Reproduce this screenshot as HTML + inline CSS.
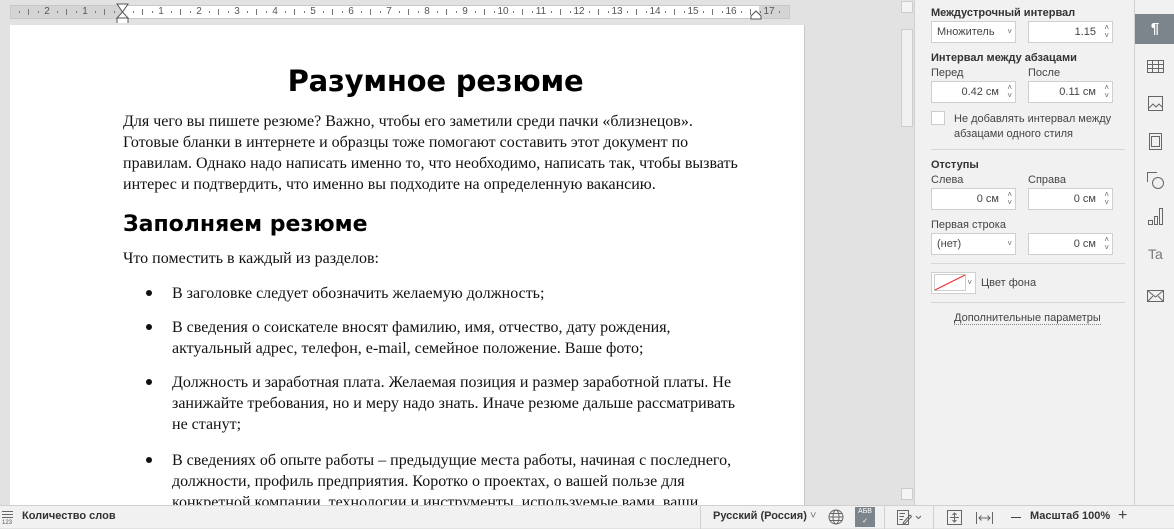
<!DOCTYPE html>
<html><head><meta charset="utf-8">
<style>
*{margin:0;padding:0;box-sizing:border-box}
body{width:1174px;height:528px;overflow:hidden;background:#e2e2e2;font-family:"Liberation Sans",sans-serif;position:relative}
.abs{position:absolute}
#ruler{left:10px;top:5px;width:780px;height:14px;background:#d4d4d4;border:1px solid #c8c8c8}
#rw{left:112px;top:0;width:636px;height:12px;background:#fff}
.tk{position:absolute;width:1px;background:#777;}
.num{position:absolute;font-size:10px;color:#555;top:0px;line-height:12px;transform:translateX(-50%)}
#page{left:10px;top:25px;width:795px;height:480px;background:#fff;border-right:1px solid #c8c8c8;overflow:hidden}
.serif{font-family:"Liberation Serif",serif;font-size:16px;line-height:21px;color:#111}
h1{position:absolute;left:28px;width:795px;top:39px;text-align:center;font-family:"DejaVu Sans",sans-serif;font-weight:bold;font-size:29px;color:#000;letter-spacing:-0.2px}
h2{position:absolute;left:113px;top:187px;font-family:"DejaVu Sans",sans-serif;font-weight:bold;font-size:22px;color:#000}
.p{position:absolute;left:113px;width:628px}
.li{position:absolute;left:162px;width:600px}
.dot{position:absolute;left:136px;width:6px;height:6px;border-radius:3px;background:#111}
#vs{left:900px;top:0;width:14px;height:505px;background:#e2e2e2}
#panel{left:914px;top:0;width:220px;height:505px;background:#f1f1f1;border-left:1px solid #d0d0d0;font-size:11px;color:#444}
#tabs{left:1134px;top:0;width:40px;height:505px;background:#f1f1f1;border-left:1px solid #d0d0d0}
.lb{position:absolute;font-size:11px;color:#444}
.b{font-weight:bold;color:#333}
.inp{position:absolute;height:22px;width:85px;background:#fff;border:1px solid #cfcfcf;font-size:11px;color:#444;line-height:20px;padding:0 16px 0 5px}
.inp.r{text-align:right}
.sp{position:absolute;right:3px;top:2px;font-size:8px;line-height:8px;color:#666}
.sep{position:absolute;left:16px;width:194px;height:1px;background:#d6d6d6}
#status{left:0;top:505px;width:1174px;height:23px;background:#f1f1f1;border-top:1px solid #d0d0d0;font-size:12px;color:#333}
.ic{position:absolute;stroke:#666;fill:none;stroke-width:1}
</style></head><body>
<div id="ruler" class="abs"><div id="rw" class="abs"></div><div id="rt"></div></div>
<svg class="abs" style="left:116px;top:3px" width="14" height="20"><path d="M1 1H12L6.5 9ZM6.5 9L1 15H12Z M1 15H12V21H1Z" stroke="#555" fill="#fff"/></svg>
<svg class="abs" style="left:750px;top:10px" width="12" height="10"><path d="M1 9H11V6L6 1L1 6Z" stroke="#555" fill="#fff"/></svg>
<div id="page" class="abs">
<h1>Разумное резюме</h1>
<div class="p serif" style="top:86px">Для чего вы пишете резюме? Важно, чтобы его заметили среди пачки «близнецов». Готовые бланки в интернете и образцы тоже помогают составить этот документ по правилам. Однако надо написать именно то, что необходимо, написать так, чтобы вызвать интерес и подтвердить, что именно вы подходите на определенную вакансию.</div>
<h2>Заполняем резюме</h2>
<div class="p serif" style="top:223px">Что поместить в каждый из разделов:</div>
<div class="dot" style="top:265px"></div><div class="li serif" style="top:258px">В заголовке следует обозначить желаемую должность;</div>
<div class="dot" style="top:299px"></div><div class="li serif" style="top:292px;width:520px">В сведения о соискателе вносят фамилию, имя, отчество, дату рождения, актуальный адрес, телефон, e-mail, семейное положение. Ваше фото;</div>
<div class="dot" style="top:354px"></div><div class="li serif" style="top:347px;width:580px">Должность и заработная плата. Желаемая позиция и размер заработной платы. Не занижайте требования, но и меру надо знать. Иначе резюме дальше рассматривать не станут;</div>
<div class="dot" style="top:432px"></div><div class="li serif" style="top:425px;width:580px">В сведениях об опыте работы – предыдущие места работы, начиная с последнего, должности, профиль предприятия. Коротко о проектах, о вашей пользе для конкретной компании, технологии и инструменты, используемые вами, ваши</div>
</div>
<div id="vs" class="abs">
<div class="abs" style="left:1px;top:1px;width:12px;height:12px;background:#f4f4f4;border:1px solid #ccc"></div>
<div class="abs" style="left:1px;top:29px;width:12px;height:98px;background:#f0f0f0;border:1px solid #ccc"></div>
<div class="abs" style="left:1px;top:488px;width:12px;height:12px;background:#f4f4f4;border:1px solid #ccc"></div>
</div>
<div id="panel" class="abs">
<div class="lb b" style="left:16px;top:7px">Междустрочный интервал</div>
<div class="inp" style="left:16px;top:21px">Множитель<span class="sp" style="top:6px">˅</span></div>
<div class="inp r" style="left:113px;top:21px">1.15<span class="sp">˄<br>˅</span></div>
<div class="lb b" style="left:16px;top:52px">Интервал между абзацами</div>
<div class="lb" style="left:16px;top:67px">Перед</div><div class="lb" style="left:113px;top:67px">После</div>
<div class="inp r" style="left:16px;top:81px">0.42 см<span class="sp">˄<br>˅</span></div>
<div class="inp r" style="left:113px;top:81px">0.11 см<span class="sp">˄<br>˅</span></div>
<div class="abs" style="left:16px;top:111px;width:14px;height:14px;background:#fff;border:1px solid #ccc"></div>
<div class="lb" style="left:39px;top:112px;line-height:15px">Не добавлять интервал между<br>абзацами одного стиля</div>
<div class="sep" style="top:149px"></div>
<div class="lb b" style="left:16px;top:159px">Отступы</div>
<div class="lb" style="left:16px;top:174px">Слева</div><div class="lb" style="left:113px;top:174px">Справа</div>
<div class="inp r" style="left:16px;top:188px">0 см<span class="sp">˄<br>˅</span></div>
<div class="inp r" style="left:113px;top:188px">0 см<span class="sp">˄<br>˅</span></div>
<div class="lb" style="left:16px;top:219px">Первая строка</div>
<div class="inp" style="left:16px;top:233px">(нет)<span class="sp" style="top:6px">˅</span></div>
<div class="inp r" style="left:113px;top:233px">0 см<span class="sp">˄<br>˅</span></div>
<div class="sep" style="top:263px"></div>
<div class="abs" style="left:16px;top:272px;width:45px;height:22px;background:#fff;border:1px solid #cfcfcf"><svg width="34" height="18" style="position:absolute;left:2px;top:1px"><rect x=".5" y=".5" width="31" height="16" fill="#fff" stroke="#ccc"/><path d="M1 16L31 1" stroke="#e33" stroke-width="1.2"/></svg><span class="sp" style="top:6px">˅</span></div>
<div class="lb" style="left:66px;top:277px">Цвет фона</div>
<div class="sep" style="top:302px"></div>
<div class="lb" style="left:39px;top:312px;border-bottom:1px dotted #888">Дополнительные параметры</div>
</div>
<div id="tabs" class="abs">
<div class="abs" style="left:0;top:14px;width:40px;height:30px;background:#7d858c;color:#fff;font-size:15px;text-align:center;line-height:30px;font-weight:bold">¶</div>
<svg class="ic" style="left:12px;top:60px" width="18" height="14"><path d="M.5 .5H16.5V12.5H.5ZM.5 4.5H16.5M.5 8.5H16.5M5.5 .5V12.5M11.5 .5V12.5"/></svg>
<svg class="ic" style="left:13px;top:96px" width="16" height="16"><path d="M.5 .5H14.5V14.5H.5ZM1 12L5 8L8 11L11 8L14 11"/></svg>
<svg class="ic" style="left:14px;top:133px" width="14" height="18"><path d="M.5 .5H12.5V16.5H.5ZM2.5 3.5H10.5V13.5H2.5Z"/></svg>
<svg class="ic" style="left:12px;top:172px" width="18" height="18"><path d="M.5 10V.5H10M.5 .5"/><circle cx="11" cy="11" r="5.5"/></svg>
<svg class="ic" style="left:13px;top:208px" width="16" height="18"><path d="M.5 12.5H4.5V16.5H.5ZM6.5 8.5H9.5V16.5H6.5ZM11.5 .5H14.5V16.5H11.5Z"/></svg>
<div class="abs" style="left:13px;top:246px;font-size:14px;color:#777">Ta</div>
<svg class="ic" style="left:12px;top:290px" width="18" height="12"><path d="M.5 .5H16.5V11.5H.5ZM.5 .5L8.5 7L16.5 .5M.5 11.5L6 6M16.5 11.5L11 6"/></svg>
</div>
<div id="status" class="abs">
<svg class="ic" style="left:2px;top:4px" width="12" height="15"><path d="M0 1.5H11M0 4.5H11M0 7.5H11"/><text x="0" y="14" font-size="6" fill="#555" stroke="none">123</text></svg>
<div class="abs" style="left:22px;top:4px;font-weight:bold;font-size:11px;color:#333">Количество слов</div>
<div class="abs" style="left:700px;top:0;width:1px;height:23px;background:#d0d0d0"></div>
<div class="abs" style="left:713px;top:4px;font-weight:bold;font-size:11px;color:#333">Русский (Россия) <span style="font-weight:normal;color:#777">˅</span></div>
<svg class="ic" style="left:828px;top:3px" width="16" height="16"><circle cx="8" cy="8" r="7"/><ellipse cx="8" cy="8" rx="3" ry="7"/><path d="M1 8H15M2 4.5H14M2 11.5H14"/></svg>
<div class="abs" style="left:855px;top:1px;width:20px;height:20px;background:#7d858c;color:#fff;font-size:7px;text-align:center;line-height:10px">АБВ<br>✓</div>
<div class="abs" style="left:884px;top:0;width:1px;height:23px;background:#d0d0d0"></div>
<svg class="ic" style="left:897px;top:4px" width="26" height="16"><path d="M.5 .5H11.5V14.5H.5ZM2.5 3.5H8M2.5 6.5H7M2.5 9.5H6M6 13L13 5L14.5 6.5L7.5 14Z M19 6L21.5 8.5L24 6"/></svg>
<div class="abs" style="left:933px;top:0;width:1px;height:23px;background:#d0d0d0"></div>
<svg class="ic" style="left:947px;top:4px" width="16" height="16"><path d="M.5 .5H14.5V14.5H.5ZM7.5 3V12M3 7.5H12M5.5 5L7.5 3L9.5 5M5.5 10L7.5 12L9.5 10"/></svg>
<svg class="ic" style="left:976px;top:5px" width="18" height="14"><path d="M.5 1V13M16.5 1V13M3 7H14M5.5 4.5L3 7L5.5 9.5M11.5 4.5L14 7L11.5 9.5"/></svg>
<div class="abs" style="left:1011px;top:11px;width:10px;height:1px;background:#444"></div>
<div class="abs" style="left:1030px;top:4px;font-weight:bold;font-size:11px;color:#333">Масштаб 100%</div>
<div class="abs" style="left:1118px;top:1px;font-size:16px;color:#444">+</div>
</div>
<script>
var rt=document.getElementById('rt'),h='';
for(var q=-12;q<=69;q++){var x=112+q*9.5;if(x<2||x>776)continue;var m=((q%4)+4)%4;
if(m==0){var n=Math.abs(q/4);if(n==0)continue;h+='<span class="num" style="left:'+x+'px">'+n+'</span>';}
else if(m==2){h+='<div class="tk" style="left:'+x+'px;top:3px;height:6px"></div>';}
else{h+='<div class="tk" style="left:'+x+'px;top:5px;height:2px"></div>';}}
rt.innerHTML=h;
</script>
</body></html>
